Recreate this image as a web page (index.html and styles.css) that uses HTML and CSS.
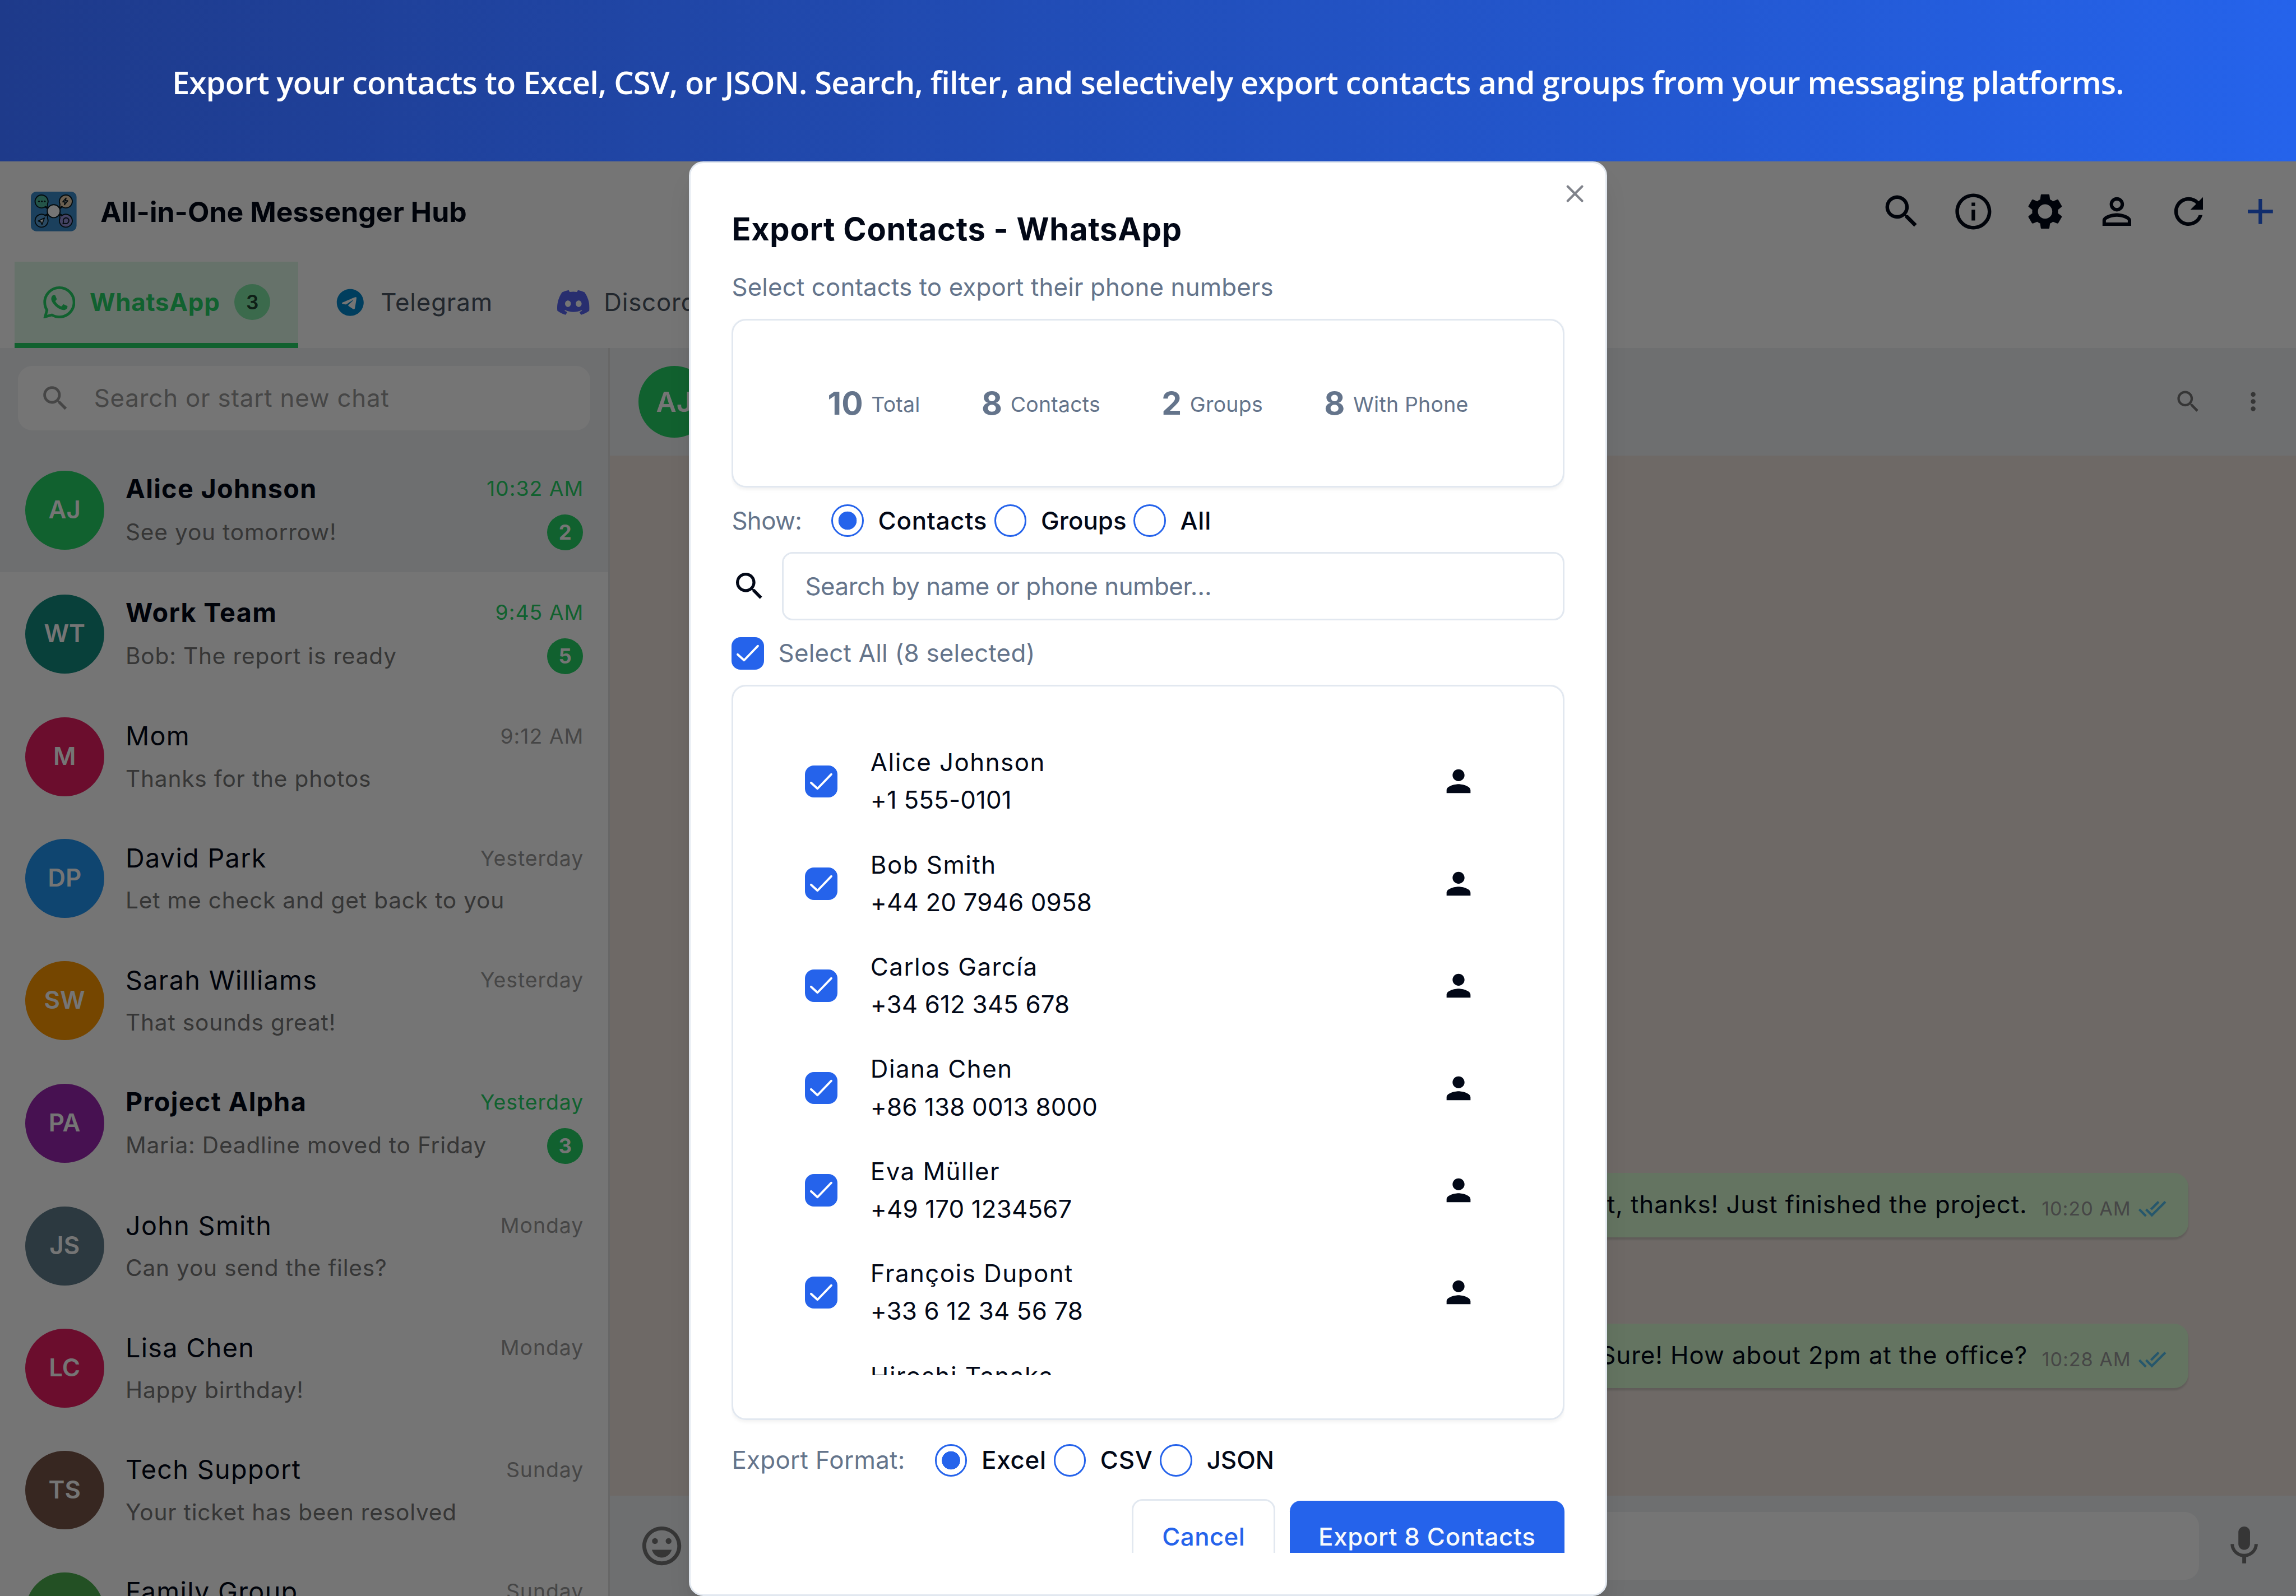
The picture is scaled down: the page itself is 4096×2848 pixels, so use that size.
FILE: index.html
```
<!DOCTYPE html>
<html lang="en">
<head>
    <meta charset="UTF-8">
    <title>All-in-One Messenger Hub</title>
    <meta name="viewport" content="width=device-width,initial-scale=1">
    <link rel="stylesheet" href="styles.css">
</head>
<body>
    <!-- icons -->
    <svg class="sprite">
        <symbol id="search" viewBox="0 0 24 24"><path d="M15.5 14h-.79l-.28-.27A6.471 6.471 0 0 0 16 9.5 6.5 6.5 0 1 0 9.5 16c1.61 0 3.09-.59 4.23-1.57l.27.28v.79l5 4.99L20.49 19l-4.99-5zm-6 0C7.01 14 5 11.99 5 9.5S7.01 5 9.5 5 14 7.01 14 9.5 11.99 14 9.5 14z"/></symbol>
        <symbol id="info" viewBox="0 0 24 24"><path d="M11 7h2v2h-2zm0 4h2v6h-2zm1-9C6.48 2 2 6.48 2 12s4.48 10 10 10 10-4.48 10-10S17.52 2 12 2zm0 18c-4.41 0-8-3.59-8-8s3.59-8 8-8 8 3.59 8 8-3.59 8-8 8z"/></symbol>
        <symbol id="gear" viewBox="0 0 24 24"><path d="M19.14 12.94c.04-.3.06-.61.06-.94 0-.32-.02-.64-.07-.94l2.03-1.58c.18-.14.23-.41.12-.61l-1.92-3.32c-.12-.22-.37-.29-.59-.22l-2.39.96c-.5-.38-1.03-.7-1.62-.94l-.36-2.54c-.04-.24-.24-.41-.48-.41h-3.84c-.24 0-.43.17-.47.41l-.36 2.54c-.59.24-1.13.57-1.62.94l-2.39-.96c-.22-.08-.47 0-.59.22L2.74 8.87c-.12.21-.08.47.12.61l2.03 1.58c-.05.3-.09.63-.09.94s.02.64.07.94l-2.03 1.58c-.18.14-.23.41-.12.61l1.92 3.32c.12.22.37.29.59.22l2.39-.96c.5.38 1.03.7 1.62.94l.36 2.54c.05.24.24.41.48.41h3.84c.24 0 .44-.17.47-.41l.36-2.54c.59-.24 1.13-.56 1.62-.94l2.39.96c.22.08.47 0 .59-.22l1.92-3.32c.12-.22.07-.47-.12-.61l-2.01-1.58zM12 16c-2.2 0-4-1.8-4-4s1.8-4 4-4 4 1.8 4 4-1.8 4-4 4z"/></symbol>
        <symbol id="person-line" viewBox="0 0 24 24"><path d="M12 5.9a2.1 2.1 0 1 1 0 4.2 2.1 2.1 0 0 1 0-4.2m0 9c2.97 0 6.1 1.46 6.1 2.1v1.1H5.9V17c0-.64 3.13-2.1 6.1-2.1M12 4C9.79 4 8 5.79 8 8s1.79 4 4 4 4-1.79 4-4-1.79-4-4-4zm0 9c-2.67 0-8 1.34-8 4v3h16v-3c0-2.66-5.33-4-8-4z"/></symbol>
        <symbol id="person" viewBox="0 0 24 24"><path d="M12 12c2.21 0 4-1.79 4-4s-1.79-4-4-4-4 1.79-4 4 1.79 4 4 4zm0 2c-2.67 0-8 1.34-8 4v2h16v-2c0-2.66-5.33-4-8-4z"/></symbol>
        <symbol id="refresh" viewBox="0 0 24 24"><path d="M17.65 6.35A7.958 7.958 0 0 0 12 4c-4.42 0-7.99 3.58-7.99 8s3.57 8 7.99 8c3.73 0 6.84-2.55 7.73-6h-2.08A5.99 5.99 0 0 1 12 18c-3.31 0-6-2.69-6-6s2.69-6 6-6c1.66 0 3.14.69 4.22 1.78L13 11h7V4l-2.35 2.35z"/></symbol>
        <symbol id="plus" viewBox="0 0 24 24"><path d="M19 13h-6v6h-2v-6H5v-2h6V5h2v6h6v2z"/></symbol>
        <symbol id="more" viewBox="0 0 24 24"><path d="M12 8c1.1 0 2-.9 2-2s-.9-2-2-2-2 .9-2 2 .9 2 2 2zm0 2c-1.1 0-2 .9-2 2s.9 2 2 2 2-.9 2-2-.9-2-2-2zm0 6c-1.1 0-2 .9-2 2s.9 2 2 2 2-.9 2-2-.9-2-2-2z"/></symbol>
        <symbol id="smile" viewBox="0 0 24 24"><path d="M11.99 2C6.47 2 2 6.48 2 12s4.47 10 9.99 10C17.52 22 22 17.52 22 12S17.52 2 11.99 2zM12 20c-4.42 0-8-3.58-8-8s3.58-8 8-8 8 3.58 8 8-3.58 8-8 8zm3.5-9c.83 0 1.5-.67 1.5-1.5S16.33 8 15.5 8 14 8.67 14 9.5s.67 1.5 1.5 1.5zm-7 0c.83 0 1.5-.67 1.5-1.5S9.33 8 8.5 8 7 8.67 7 9.5 7.67 11 8.5 11zm3.5 7c2.33 0 4.31-1.46 5.11-4H6.89c.8 2.54 2.78 4 5.11 4z"/></symbol>
        <symbol id="mic" viewBox="0 0 24 24"><path d="M12 14c1.66 0 2.99-1.34 2.99-3L15 5c0-1.66-1.34-3-3-3S9 3.34 9 5v6c0 1.66 1.34 3 3 3zm5.3-3c0 3-2.54 5.1-5.3 5.1S6.7 14 6.7 11H5c0 3.41 2.72 6.23 6 6.72V21h2v-3.28c3.28-.48 6-3.3 6-6.72h-1.7z"/></symbol>
        <symbol id="ticks" viewBox="0 0 24 24"><path d="M18 7l-1.41-1.41-6.34 6.34 1.41 1.41L18 7zm4.24-1.41L11.66 16.17 7.48 12l-1.41 1.41L11.66 19l12-12-1.42-1.41zM.41 13.41L6 19l1.41-1.41L1.83 12 .41 13.41z"/></symbol>
        <symbol id="check" viewBox="0 0 18 18"><path d="M3.4 9.6L7 12.9 14.7 4.9" fill="none" stroke="#fff" stroke-width="1.2" stroke-linecap="round" stroke-linejoin="round"/></symbol>
        <symbol id="close" viewBox="0 0 24 24"><path d="M18 6L6 18M6 6l12 12" fill="none" stroke="currentColor" stroke-width="2" stroke-linecap="round"/></symbol>
        <symbol id="whatsapp" viewBox="0 0 24 24"><path d="M17.472 14.382c-.297-.149-1.758-.867-2.03-.967-.273-.099-.471-.148-.67.15-.197.297-.767.966-.94 1.164-.173.199-.347.223-.644.075-.297-.15-1.255-.463-2.39-1.475-.883-.788-1.48-1.761-1.653-2.059-.173-.297-.018-.458.13-.606.134-.133.298-.347.446-.52.149-.174.198-.298.298-.497.099-.198.05-.371-.025-.52-.075-.149-.669-1.612-.916-2.207-.242-.579-.487-.5-.669-.51-.173-.008-.371-.01-.57-.01-.198 0-.52.074-.792.372-.272.297-1.04 1.016-1.04 2.479 0 1.462 1.065 2.875 1.213 3.074.149.198 2.096 3.2 5.077 4.487.709.306 1.262.489 1.694.625.712.227 1.36.195 1.871.118.571-.085 1.758-.719 2.006-1.413.248-.694.248-1.289.173-1.413-.074-.124-.272-.198-.57-.347m-5.421 7.403h-.004a9.87 9.87 0 0 1-5.031-1.378l-.361-.214-3.741.982.998-3.648-.235-.374a9.86 9.86 0 0 1-1.51-5.26c.001-5.45 4.436-9.884 9.888-9.884 2.64 0 5.122 1.03 6.988 2.898a9.825 9.825 0 0 1 2.893 6.994c-.003 5.45-4.437 9.884-9.885 9.884m8.413-18.297A11.815 11.815 0 0 0 12.05 0C5.495 0 .16 5.335.157 11.892c0 2.096.547 4.142 1.588 5.945L.057 24l6.305-1.654a11.882 11.882 0 0 0 5.683 1.448h.005c6.554 0 11.89-5.335 11.893-11.893a11.821 11.821 0 0 0-3.48-8.413z"/></symbol>
        <symbol id="telegram" viewBox="0 0 24 24"><path d="M12 2C6.48 2 2 6.48 2 12s4.48 10 10 10 10-4.48 10-10S17.52 2 12 2zm4.64 6.8c-.15 1.58-.8 5.42-1.13 7.19-.14.75-.42 1-.68 1.03-.58.05-1.02-.38-1.58-.75-.88-.58-1.38-.94-2.23-1.5-.99-.65-.35-1.01.22-1.59.15-.15 2.71-2.48 2.76-2.69a.2.2 0 0 0-.05-.18c-.06-.05-.14-.03-.21-.02-.09.02-1.49.95-4.22 2.79-.4.27-.76.41-1.08.4-.36-.01-1.04-.2-1.55-.37-.63-.2-1.12-.31-1.08-.66.02-.18.27-.36.74-.55 2.92-1.27 4.86-2.11 5.83-2.51 2.78-1.16 3.35-1.36 3.73-1.36.08 0 .27.02.39.12.1.08.13.19.14.27-.01.06.01.24 0 .38z"/></symbol>
        <symbol id="discord" viewBox="0 0 24 24"><path d="M20.317 4.3698a19.7913 19.7913 0 0 0-4.8851-1.5152.0741.0741 0 0 0-.0785.0371c-.211.3753-.4447.8648-.6083 1.2495-1.8447-.2762-3.68-.2762-5.4868 0-.1636-.3933-.4058-.8742-.6177-1.2495a.077.077 0 0 0-.0785-.037 19.7363 19.7363 0 0 0-4.8852 1.515.0699.0699 0 0 0-.0321.0277C.5334 9.0458-.319 13.5799.0992 18.0578a.0824.0824 0 0 0 .0312.0561c2.0528 1.5076 4.0413 2.4228 5.9929 3.0294a.0777.0777 0 0 0 .0842-.0276c.4616-.6304.8731-1.2952 1.226-1.9942a.076.076 0 0 0-.0416-.1057c-.6528-.2476-1.2743-.5495-1.8722-.8923a.077.077 0 0 1-.0076-.1277c.1258-.0943.2517-.1923.3718-.2914a.0743.0743 0 0 1 .0776-.0105c3.9278 1.7933 8.18 1.7933 12.0614 0a.0739.0739 0 0 1 .0785.0095c.1202.099.246.1981.3728.2924a.077.077 0 0 1-.0066.1276 12.2986 12.2986 0 0 1-1.873.8914.0766.0766 0 0 0-.0407.1067c.3604.698.7719 1.3628 1.225 1.9932a.076.076 0 0 0 .0842.0286c1.961-.6067 3.9495-1.5219 6.0023-3.0294a.077.077 0 0 0 .0313-.0552c.5004-5.177-.8382-9.6739-3.5485-13.6604a.061.061 0 0 0-.0312-.0286zM8.02 15.3312c-1.1825 0-2.1569-1.0857-2.1569-2.419 0-1.3332.9555-2.4189 2.157-2.4189 1.2108 0 2.1757 1.0952 2.1568 2.419 0 1.3332-.9555 2.4189-2.1569 2.4189zm7.9748 0c-1.1825 0-2.1569-1.0857-2.1569-2.419 0-1.3332.9554-2.4189 2.1569-2.4189 1.2108 0 2.1757 1.0952 2.1568 2.419 0 1.3332-.946 2.4189-2.1568 2.4189Z"/></symbol>
    </svg>

    <div class="banner">
        <p>Export your contacts to Excel, CSV, or JSON. Search, filter, and selectively export contacts and groups from your messaging platforms.</p>
    </div>

    <div class="app">
        <header class="app-header">
            <svg class="logo" viewBox="0 0 28 28">
                <rect x="1.25" y="2.8" width="25.5" height="22.1" rx="3" fill="#3c8ccb"/>
                <g stroke="#0a1b22" stroke-width=".6" stroke-linejoin="round" stroke-linecap="round">
                    <path d="M9.2 11.3l1.5 1.1-.4-2M18.8 11.3l-1.5 1.1.4-2M9.2 16l1.5-.9-.4 1.9M18.8 16l-1.5-.9.4 1.9" fill="none"/>
                    <path d="M9.6 11l1.2 1-.3-2.2A3.6 3.6 0 1 0 9.6 11z" fill="#4fb99f"/>
                    <path d="M18.4 11l-1.2 1 .3-2.2A3.6 3.6 0 1 1 18.4 11z" fill="#e8cfae"/>
                    <path d="M9.6 16.3l1.2-1-.3 2.2A3.6 3.6 0 1 1 9.6 16.3z" fill="#5b9fd6"/>
                    <path d="M18.4 16.3l-1.2-1 .3 2.2A3.6 3.6 0 1 0 18.4 16.3z" fill="#9490d8"/>
                    <circle cx="14" cy="13.7" r="3.6" fill="#fff"/>
                    <path d="M5.4 19.2l3.4-1.7-1.3 3.6-.6-1.4z" fill="#fff"/>
                    <path d="M20.9 6.4l-1.8 2.1h1.2l-.3 1.6 1.8-2.2h-1.3z" fill="#fff"/>
                    <path d="M19.2 20.7l.2-1.1a1.6 1.6 0 1 1 .9.9z" fill="none"/>
                </g>
                <g fill="#0a1b22"><circle cx="5.8" cy="8.2" r=".5"/><circle cx="7.4" cy="8.2" r=".5"/><circle cx="9" cy="8.2" r=".5"/></g>
            </svg>
            <h1>All-in-One Messenger Hub</h1>
            <div class="actions">
                <svg><use href="#search"/></svg>
                <svg><use href="#info"/></svg>
                <svg><use href="#gear"/></svg>
                <svg><use href="#person-line"/></svg>
                <svg><use href="#refresh"/></svg>
                <svg class="add"><use href="#plus"/></svg>
            </div>
        </header>

        <nav class="tabs">
            <a class="tab active"><svg class="wa"><use href="#whatsapp"/></svg><span>WhatsApp</span><b>3</b></a>
            <a class="tab"><svg class="tg"><use href="#telegram"/></svg><span>Telegram</span></a>
            <a class="tab"><svg class="dc"><use href="#discord"/></svg><span>Discord</span></a>
        </nav>

        <div class="main">
            <aside class="sidebar">
                <div class="side-search">
                    <div class="search-box"><svg><use href="#search"/></svg><span>Search or start new chat</span></div>
                </div>
                <div class="chats">
                    <div class="chat unread selected">
                        <div class="avatar green">AJ</div>
                        <div class="info">
                            <div class="top"><span class="name">Alice Johnson</span><span class="time">10:32 AM</span></div>
                            <div class="bottom"><span>See you tomorrow!</span><b class="count">2</b></div>
                        </div>
                    </div>
                    <div class="chat unread">
                        <div class="avatar teal">WT</div>
                        <div class="info">
                            <div class="top"><span class="name">Work Team</span><span class="time">9:45 AM</span></div>
                            <div class="bottom"><span>Bob: The report is ready</span><b class="count">5</b></div>
                        </div>
                    </div>
                    <div class="chat">
                        <div class="avatar pink">M</div>
                        <div class="info">
                            <div class="top"><span class="name">Mom</span><span class="time">9:12 AM</span></div>
                            <div class="bottom"><span>Thanks for the photos</span></div>
                        </div>
                    </div>
                    <div class="chat">
                        <div class="avatar blue">DP</div>
                        <div class="info">
                            <div class="top"><span class="name">David Park</span><span class="time">Yesterday</span></div>
                            <div class="bottom"><span>Let me check and get back to you</span></div>
                        </div>
                    </div>
                    <div class="chat">
                        <div class="avatar orange">SW</div>
                        <div class="info">
                            <div class="top"><span class="name">Sarah Williams</span><span class="time">Yesterday</span></div>
                            <div class="bottom"><span>That sounds great!</span></div>
                        </div>
                    </div>
                    <div class="chat unread">
                        <div class="avatar purple">PA</div>
                        <div class="info">
                            <div class="top"><span class="name">Project Alpha</span><span class="time">Yesterday</span></div>
                            <div class="bottom"><span>Maria: Deadline moved to Friday</span><b class="count">3</b></div>
                        </div>
                    </div>
                    <div class="chat">
                        <div class="avatar slate">JS</div>
                        <div class="info">
                            <div class="top"><span class="name">John Smith</span><span class="time">Monday</span></div>
                            <div class="bottom"><span>Can you send the files?</span></div>
                        </div>
                    </div>
                    <div class="chat">
                        <div class="avatar pink">LC</div>
                        <div class="info">
                            <div class="top"><span class="name">Lisa Chen</span><span class="time">Monday</span></div>
                            <div class="bottom"><span>Happy birthday!</span></div>
                        </div>
                    </div>
                    <div class="chat">
                        <div class="avatar brown">TS</div>
                        <div class="info">
                            <div class="top"><span class="name">Tech Support</span><span class="time">Sunday</span></div>
                            <div class="bottom"><span>Your ticket has been resolved</span></div>
                        </div>
                    </div>
                    <div class="chat">
                        <div class="avatar leaf"></div>
                        <div class="info">
                            <div class="top"><span class="name">Family Group</span><span class="time">Sunday</span></div>
                            <div class="bottom"></div>
                        </div>
                    </div>
                </div>
            </aside>

            <section class="conversation">
                <div class="conv-header">
                    <div class="avatar green">AJ</div>
                    <div class="conv-actions">
                        <svg><use href="#search"/></svg>
                        <svg><use href="#more"/></svg>
                    </div>
                </div>
                <div class="messages">
                    <div class="bubble"><span>I'm great, thanks! Just finished the project.</span><em>10:20 AM</em><svg><use href="#ticks"/></svg></div>
                    <div class="bubble"><span>Sure! How about 2pm at the office?</span><em>10:28 AM</em><svg><use href="#ticks"/></svg></div>
                </div>
                <div class="composer">
                    <svg><use href="#smile"/></svg>
                    <div class="field"></div>
                    <svg><use href="#mic"/></svg>
                </div>
            </section>
        </div>

        <!-- export dialog -->
        <div class="overlay">
            <div class="modal">
                <svg class="close"><use href="#close"/></svg>
                <div class="modal-body">
                    <h2>Export Contacts - WhatsApp</h2>
                    <p class="desc">Select contacts to export their phone numbers</p>

                    <div class="card stats">
                        <div><strong>10</strong><span>Total</span></div>
                        <div><strong>8</strong><span>Contacts</span></div>
                        <div><strong>2</strong><span>Groups</span></div>
                        <div><strong>8</strong><span>With Phone</span></div>
                    </div>

                    <div class="options">
                        <span class="label tight">Show:</span>
                        <i class="radio on"></i><span class="opt wide">Contacts</span>
                        <i class="radio"></i><span class="opt">Groups</span>
                        <i class="radio"></i><span class="opt wide">All</span>
                    </div>

                    <div class="find">
                        <svg><use href="#search"/></svg>
                        <div class="input">Search by name or phone number…</div>
                    </div>

                    <div class="select-all">
                        <svg class="checkbox"><use href="#check"/></svg>
                        <span>Select All (8 selected)</span>
                    </div>

                    <div class="card list">
                        <div class="rows">
                            <div class="row"><svg class="checkbox"><use href="#check"/></svg><div class="who"><p>Alice Johnson</p><p class="phone">+1 555-0101</p></div><svg class="user"><use href="#person"/></svg></div>
                            <div class="row"><svg class="checkbox"><use href="#check"/></svg><div class="who"><p>Bob Smith</p><p class="phone">+44 20 7946 0958</p></div><svg class="user"><use href="#person"/></svg></div>
                            <div class="row"><svg class="checkbox"><use href="#check"/></svg><div class="who"><p>Carlos García</p><p class="phone">+34 612 345 678</p></div><svg class="user"><use href="#person"/></svg></div>
                            <div class="row"><svg class="checkbox"><use href="#check"/></svg><div class="who"><p>Diana Chen</p><p class="phone">+86 138 0013 8000</p></div><svg class="user"><use href="#person"/></svg></div>
                            <div class="row"><svg class="checkbox"><use href="#check"/></svg><div class="who"><p>Eva Müller</p><p class="phone">+49 170 1234567</p></div><svg class="user"><use href="#person"/></svg></div>
                            <div class="row"><svg class="checkbox"><use href="#check"/></svg><div class="who"><p>François Dupont</p><p class="phone">+33 6 12 34 56 78</p></div><svg class="user"><use href="#person"/></svg></div>
                            <div class="row"><svg class="checkbox"><use href="#check"/></svg><div class="who"><p>Hiroshi Tanaka</p></div></div>
                        </div>
                    </div>

                    <div class="options format">
                        <span class="label">Export Format:</span>
                        <i class="radio on"></i><span class="opt wide">Excel</span>
                        <i class="radio"></i><span class="opt wide">CSV</span>
                        <i class="radio"></i><span class="opt">JSON</span>
                    </div>

                    <div class="buttons">
                        <button class="btn cancel">Cancel</button>
                        <button class="btn primary">Export 8 Contacts</button>
                    </div>
                </div>
            </div>
        </div>
    </div>
</body>
</html>
```

FILE: styles.css
```
*{
    padding: 0;
    margin: 0;
    box-sizing: border-box;
}
/* 1rem = one layout unit, the page is 1280 x 890 units */
html{
    font-size: 3.2px;
}
body{
    width: 1280rem;
    height: 890rem;
    font-family: Inter, sans-serif;
    font-size: 13.7rem;
    color: #020817;
    overflow: hidden;
}
svg{
    display: block;
    flex: none;
    fill: currentColor;
}
.sprite{
    display: none;
}

/* banner */
.banner{
    height: 90rem;
    padding-top: 1.4rem;
    display: flex;
    align-items: center;
    justify-content: center;
    background: linear-gradient(90deg, #1e3a8a, #2563eb);
}
.banner p{
    font-family: "Open Sans", sans-serif;
    font-size: 17.5rem;
    font-weight: 600;
    letter-spacing: -0.25rem;
    white-space: nowrap;
    color: #fff;
}

/* app */
.app{
    position: relative;
    height: 800rem;
    display: flex;
    flex-direction: column;
    background-color: #fff;
}
.app-header{
    height: 56rem;
    padding: 0 8rem 0 16rem;
    display: flex;
    align-items: center;
    gap: 12rem;
}
.logo{
    width: 28rem;
    height: 28rem;
}
.app-header h1{
    font-size: 15.6rem;
    font-weight: 650;
    letter-spacing: 0.01rem;
}
.actions{
    margin-left: auto;
    display: flex;
    gap: 16rem;
}
.actions svg{
    width: 24rem;
    height: 24rem;
}
.actions .add{
    color: #2563eb;
}
.tabs{
    height: 48rem;
    padding-left: 8rem;
    display: flex;
    gap: 4rem;
}
.tab{
    height: 48rem;
    padding: 0 16rem;
    display: flex;
    align-items: center;
    gap: 8rem;
    border-bottom: 3rem solid transparent;
    color: #4b5563;
    letter-spacing: 0.26rem;
}
.tab svg{
    width: 18rem;
    height: 18rem;
}
.tab.active{
    padding-right: 15.6rem;
    background-color: rgba(37,211,102,0.15);
    border-bottom-color: #25d366;
    color: #25d366;
    font-weight: 650;
    letter-spacing: 0.24rem;
}
.tab b{
    width: 20rem;
    height: 20rem;
    border-radius: 50%;
    background-color: rgba(37,211,102,0.5);
    color: #1f4430;
    font-size: 11rem;
    line-height: 20rem;
    font-weight: 600;
    letter-spacing: 0;
    text-align: center;
}
.wa{
    color: #25d366;
}
.tg{
    color: #08c;
}
.dc{
    color: #5865f2;
}
.main{
    flex: 1;
    min-height: 0;
    display: flex;
}

/* sidebar */
.sidebar{
    width: 340rem;
    border-right: 1rem solid #e0e0e0;
    overflow: hidden;
}
.side-search{
    height: 56rem;
    padding: 10rem;
    background-color: #f0f2f5;
}
.search-box{
    height: 36rem;
    padding: 0 12rem;
    display: flex;
    align-items: center;
    gap: 12.4rem;
    border-radius: 8rem;
    background-color: #fff;
    color: #999;
    letter-spacing: 0.25rem;
}
.search-box svg{
    width: 18rem;
    height: 18rem;
}
.chat{
    padding: 12rem 14rem;
    display: flex;
    align-items: center;
    gap: 12rem;
}
.chat.selected{
    background-color: #f0f2f5;
}
.avatar{
    width: 44rem;
    height: 44rem;
    flex: none;
    border-radius: 50%;
    line-height: 44rem;
    text-align: center;
    color: #fff;
    font-weight: 600;
}
.green{ background-color: #25d366; }
.teal{ background-color: #128c7e; }
.pink{ background-color: #e91e63; }
.blue{ background-color: #2196f3; }
.orange{ background-color: #ff9800; }
.purple{ background-color: #9c27b0; }
.slate{ background-color: #607d8b; }
.brown{ background-color: #795548; }
.leaf{ background-color: #4caf50; }
.info{
    flex: 1;
}
.top,.bottom{
    display: flex;
    align-items: center;
    justify-content: space-between;
    white-space: nowrap;
}
.top{
    height: 21rem;
    margin-bottom: 4rem;
}
.bottom{
    min-height: 19rem;
    font-size: 12.7rem;
    line-height: 19rem;
    letter-spacing: 0.25rem;
    color: #777;
}
.name{
    font-size: 14.6rem;
    letter-spacing: 0.41rem;
}
.time{
    font-size: 11.7rem;
    letter-spacing: 0.29rem;
    margin-right: -0.3rem;
    color: #999;
}
.unread .name{
    font-weight: 650;
}
.unread .time{
    color: #25d366;
}
.count{
    width: 20rem;
    height: 20rem;
    border-radius: 50%;
    background-color: #25d366;
    color: #fff;
    font-size: 11.4rem;
    line-height: 20rem;
    font-weight: 650;
    letter-spacing: 0;
    text-align: center;
}

/* conversation */
.conversation{
    flex: 1;
    display: flex;
    flex-direction: column;
    background-color: #efe5de;
}
.conv-header{
    height: 60rem;
    padding: 0 16rem;
    display: flex;
    align-items: center;
    justify-content: space-between;
    background-color: #f0f2f5;
}
.conv-header .avatar{
    width: 40rem;
    height: 40rem;
    line-height: 40rem;
    font-size: 15.6rem;
}
.conv-actions{
    display: flex;
    gap: 20rem;
    color: #777;
}
.conv-actions svg{
    width: 16rem;
    height: 16rem;
}
.messages{
    flex: 1;
    padding: 0 60rem;
    padding-bottom: 60rem;
    display: flex;
    flex-direction: column;
    align-items: flex-end;
    justify-content: flex-end;
    gap: 48rem;
}
.bubble{
    height: 36rem;
    padding: 8rem 12rem;
    display: flex;
    align-items: flex-end;
    gap: 4rem;
    border-radius: 8rem;
    background-color: #d9fdd3;
    box-shadow: 0 1rem 1rem rgba(0,0,0,0.13);
    line-height: 20rem;
    letter-spacing: 0.29rem;
    white-space: nowrap;
}
.bubble span{
    margin-right: 4rem;
}
.bubble em{
    font-style: normal;
    font-size: 10.7rem;
    line-height: 16rem;
    color: #999;
}
.bubble svg{
    width: 16rem;
    height: 16rem;
    color: #53bdeb;
}
.composer{
    height: 56rem;
    padding: 0 16rem;
    display: flex;
    align-items: center;
    gap: 12rem;
    background-color: #f0f2f5;
    color: #777;
}
.composer svg{
    width: 26rem;
    height: 26rem;
}
.field{
    flex: 1;
    height: 38rem;
    border-radius: 8rem;
    background-color: #fff;
}

/* dialog */
.overlay{
    position: absolute;
    top: 0;
    left: 0;
    width: 100%;
    height: 100%;
    display: flex;
    justify-content: center;
    background-color: rgba(0,0,0,0.54);
}
.modal{
    position: relative;
    width: 512rem;
    height: 800rem;
    padding: 23rem;
    border: 1rem solid #e2e8f0;
    border-radius: 8rem;
    background-color: #fff;
    box-shadow: 0 10rem 15rem -3rem rgba(0,0,0,0.1), 0 4rem 6rem -4rem rgba(0,0,0,0.1);
}
.close{
    position: absolute;
    top: 9rem;
    right: 9rem;
    width: 16rem;
    height: 16rem;
    color: #80838b;
}
.modal-body{
    height: 752rem;
    display: flex;
    flex-direction: column;
    gap: 8rem;
    overflow: hidden;
}
.modal-body > *{
    flex: none;
}
.modal h2{
    font-size: 17.5rem;
    line-height: 28rem;
    font-weight: 650;
    letter-spacing: 0.23rem;
}
.desc{
    line-height: 20.6rem;
    height: 20rem;
    letter-spacing: 0.04rem;
    color: #64748b;
}
.card{
    border: 1rem solid #e2e8f0;
    border-radius: 8rem;
    box-shadow: 0 1rem 2rem rgba(0,0,0,0.05);
}
.stats{
    height: 94rem;
    display: flex;
    align-items: center;
    justify-content: center;
    gap: 34.2rem;
    color: #64748b;
}
.stats div{
    display: flex;
    align-items: center;
    gap: 4.5rem;
    font-size: 11.7rem;
    letter-spacing: 0.07rem;
}
.stats span{
    padding-top: 0.8rem;
}
.stats strong{
    font-size: 17.8rem;
    font-weight: 700;
}
.options{
    height: 20rem;
    padding-top: 0.8rem;
    display: flex;
    align-items: center;
}
.format{
    height: 28rem;
}
.label{
    margin-right: 16.6rem;
    letter-spacing: 0.1rem;
    color: #64748b;
}
.tight{
    letter-spacing: -0.2rem;
}
.radio{
    width: 18rem;
    height: 18rem;
    border: 1rem solid #2563eb;
    border-radius: 50%;
}
.radio.on{
    background: radial-gradient(circle, #2563eb 5rem, transparent 5.2rem);
}
.opt{
    margin: 0 4rem 0 8rem;
    font-weight: 500;
}
.wide{
    letter-spacing: 0.24rem;
}
.find{
    display: flex;
    align-items: center;
    gap: 8rem;
}
.find svg{
    width: 20rem;
    height: 20rem;
}
.input{
    flex: 1;
    height: 38rem;
    padding-left: 12rem;
    border: 1rem solid #e2e8f0;
    border-radius: 6rem;
    line-height: 37rem;
    letter-spacing: -0.15rem;
    color: #64748b;
}
.select-all{
    height: 20rem;
    padding-top: 0.8rem;
    display: flex;
    align-items: center;
    gap: 8rem;
    color: #64748b;
    letter-spacing: 0.07rem;
}
.checkbox{
    width: 18rem;
    height: 18rem;
    border-radius: 5rem;
    background-color: #2563eb;
}
.list{
    height: 410rem;
    padding: 24rem;
}
.rows{
    height: 360rem;
    padding-top: 0.4rem;
    overflow: hidden;
}
.row{
    height: 57rem;
    padding: 0 24rem 0 16rem;
    display: flex;
    align-items: center;
    gap: 18.4rem;
}
.who{
    flex: 1;
    height: 42rem;
    line-height: 21rem;
    letter-spacing: 0.46rem;
}
.who .phone{
    letter-spacing: 0.05rem;
}
.user{
    width: 20rem;
    height: 20rem;
}
.buttons{
    display: flex;
    align-items: center;
    justify-content: flex-end;
    gap: 8rem;
}
.btn{
    height: 42rem;
    padding: 0 16rem;
    border: 1rem solid #e2e8f0;
    border-radius: 6rem;
    background-color: #fff;
    color: #2563eb;
    font-family: inherit;
    font-size: 13.7rem;
    font-weight: 500;
    letter-spacing: 0.12rem;
}
.primary{
    height: 40rem;
    border: none;
    background-color: #2563eb;
    color: #f8fafc;
    letter-spacing: 0.2rem;
}
```
